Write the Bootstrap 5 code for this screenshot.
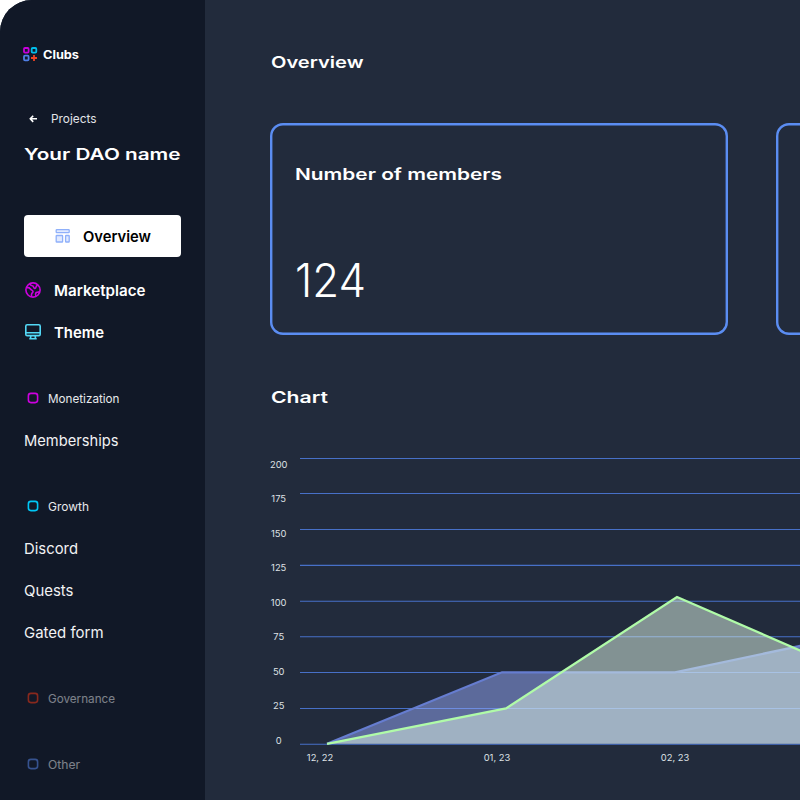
<!DOCTYPE html>
<html lang="en">
<head>
<meta charset="utf-8">
<meta name="viewport" content="width=device-width, initial-scale=1">
<title>Clubs</title>
<link href="https://cdn.jsdelivr.net/npm/bootstrap@5.3.0/dist/css/bootstrap.min.css" rel="stylesheet">
<style>
body{background:#fff;font-family:Inter,sans-serif;color:#fff;height:800px;overflow:hidden}
.shell{height:800px;width:800px;background:#222b3c;border-top-left-radius:32px}
.side{width:205.3px;background:#111827;padding:0 24px}
svg{display:block;flex:none}
.fit{display:inline-block;white-space:nowrap;transform-origin:0 50%}
.brand{height:24px;margin-top:42px;margin-left:-1px;gap:5px;font-size:12px;font-weight:700;line-height:24px}
.back{height:24px;margin-top:40px;padding-left:4.5px;gap:14px;font-size:12px;color:#e2e4e8}
.wide{font-weight:600;font-size:16px;line-height:24px;margin:0}
.dao{margin-top:11px}
.page-title{margin-top:49px;padding-left:.5px}
.chart{margin-top:32px}
.item{height:42px;font-size:15px;line-height:42px;color:#f1f2f4;text-decoration:none}
.item.main-link{font-weight:600;color:#fff;gap:12px}
.item.on{background:#fff;color:#000;border-radius:4px;padding-left:30px;gap:11px;margin:50px 0 12px;width:157px}
.group{margin-top:24px}
.group-title{height:42px;gap:9px;padding-left:3px;font-size:12px;color:#e7e9ec}
.dim{opacity:.5}
.content{width:595px;padding-left:65px}
.stats{gap:48px;margin-top:50px;width:964px}
.stat{width:458px;height:212px;box-shadow:inset 0 0 0 2.4px #5b8df2;border-radius:13px;padding:38px 24.5px 0;flex:none}
.figure-num{font-size:46px;line-height:56px;font-weight:300;margin-top:66px}
</style>
<script src="https://cdn.jsdelivr.net/npm/bootstrap@5.3.0/dist/js/bootstrap.bundle.min.js"></script>
</head>
<body>
<div class="shell d-flex overflow-hidden">
  <nav class="side flex-shrink-0 d-flex flex-column">
    <div class="brand d-flex align-items-center">
      <svg width="15" height="16" viewBox="0 0 15 16" fill="none" stroke-width="1.8"><rect x="1" y="2" width="4.6" height="4.6" rx="1" stroke="#c800dc"/><rect x="8.7" y="2" width="4.6" height="4.6" rx="1" stroke="#00bdea"/><rect x="1" y="9.7" width="4.6" height="4.6" rx="1" stroke="#4f7fe6"/><path d="M11 9v6M8 12h6" stroke="#ef4423"/></svg>
      <span class="fit" data-w="36">Clubs</span>
    </div>
    <div class="back d-flex align-items-center">
      <svg width="8" height="9" viewBox="0 0 8 9" fill="none" stroke="#fff" stroke-width="1.6"><path d="M4.2 1.7 1.3 4.8l2.9 3.1M1.3 4.8h6.7"/></svg>
      <span class="fit" data-w="45.5">Projects</span>
    </div>
    <h1 class="wide dao"><span class="fit" data-w="156.5">Your DAO name</span></h1>
    <a class="item main-link on d-flex align-items-center">
      <svg width="18" height="18" viewBox="0 0 18 18" fill="#e1eaff" stroke="#8fb0fa" stroke-width="1.3"><rect x="2.2" y="2.6" width="13" height="3" rx=".6"/><rect x="2.2" y="8.5" width="6.4" height="6.5" rx=".6"/><rect x="11.6" y="8.5" width="3.6" height="6.5" rx=".6"/></svg>
      <span class="fit" data-w="68">Overview</span>
    </a>
    <a class="item main-link d-flex align-items-center">
      <svg width="18" height="18" viewBox="0 0 18 18" fill="none" stroke="#cd00df" stroke-width="1.6" stroke-linejoin="round"><circle cx="9" cy="9" r="7.1"/><path d="M6.1 2.6c0 1.6.9 2 2 2.1s1.3.5 1.5 1.5 1.3 1.6 2 .8.3-1.7 1.2-2.3l1-.6M2.3 6.6h1.9c1.5 0 1.7.9 2.6 1.8s2.2 1 2.2 2.2-.9 1.2-1.3 2.2-.2 2-.2 3M11.9 15.3l-.3-1.6c-.2-1.5.4-2.2 1.6-2.4l2.2-.4"/></svg>
      <span class="fit" data-w="91.5">Marketplace</span>
    </a>
    <a class="item main-link d-flex align-items-center">
      <svg width="18" height="18" viewBox="0 0 18 18" fill="none" stroke="#53d8f6" stroke-width="1.6"><rect x="1.8" y="1.8" width="14.4" height="10.8" rx="1.4"/><path d="M2 9.7h14M6.8 12.8l-.3 2.9M11.2 12.8l.3 2.9M5.3 15.7h7.4"/></svg>
      <span class="fit" data-w="50">Theme</span>
    </a>
    <div class="group">
      <div class="group-title d-flex align-items-center"><svg width="12" height="12" viewBox="0 0 12 12"><rect x="1.4" y="1.4" width="9.2" height="9.2" rx="2.5" fill="none" stroke="#cd00df" stroke-width="1.6"/></svg><span class="fit" data-w="71.5">Monetization</span></div>
      <a class="item d-block"><span class="fit" data-w="94.5">Memberships</span></a>
    </div>
    <div class="group">
      <div class="group-title d-flex align-items-center"><svg width="12" height="12" viewBox="0 0 12 12"><rect x="1.4" y="1.4" width="9.2" height="9.2" rx="2.5" fill="none" stroke="#00c6f5" stroke-width="1.6"/></svg><span class="fit" data-w="41">Growth</span></div>
      <a class="item d-block"><span class="fit" data-w="54">Discord</span></a>
      <a class="item d-block"><span class="fit" data-w="49.5">Quests</span></a>
      <a class="item d-block"><span class="fit" data-w="79.5">Gated form</span></a>
    </div>
    <div class="group dim">
      <div class="group-title d-flex align-items-center"><svg width="12" height="12" viewBox="0 0 12 12"><rect x="1.4" y="1.4" width="9.2" height="9.2" rx="2.5" fill="none" stroke="#ff3815" stroke-width="1.6"/></svg><span class="fit" data-w="67">Governance</span></div>
    </div>
    <div class="group dim">
      <div class="group-title d-flex align-items-center"><svg width="12" height="12" viewBox="0 0 12 12"><rect x="1.4" y="1.4" width="9.2" height="9.2" rx="2.5" fill="none" stroke="#5b8df6" stroke-width="1.6"/></svg><span class="fit" data-w="32">Other</span></div>
    </div>
  </nav>
  <main class="content overflow-hidden">
    <h2 class="wide page-title"><span class="fit" data-w="92.5">Overview</span></h2>
    <section class="stats d-flex">
      <div class="stat">
        <h3 class="wide"><span class="fit" data-w="207">Number of members</span></h3>
        <div class="figure-num"><span class="fit" data-w="71">124</span></div>
      </div>
      <div class="stat"></div>
    </section>
    <h2 class="wide page-title"><span class="fit" data-w="57">Chart</span></h2>
    <svg class="chart" width="530" height="360" viewBox="270 440 530 360">
      <g stroke="#4770c8" stroke-width="1.1"><path d="M300 458.5H800M300 493.5H800M300 529.5H800M300 565.4H800M300 601.2H800M300 636.8H800M300 672.5H800M300 708.5H800M300 744.3H800"/></g>
      <path d="M327 743.8 502 672.3H675L800 646V743.8Z" fill="#95a9fa" fill-opacity=".5"/>
      <path d="M327 743.8 502 672.3H675L805 645" fill="none" stroke="#667dd0" stroke-width="2.3"/>
      <path d="M327 743.8 506 708.5 677 597 800 650.5V743.8Z" fill="#dff5e8" fill-opacity=".51"/>
      <path d="M327 743.8 506 708.5 677 597 805 652.6" fill="none" stroke="#b0fba8" stroke-width="2.3"/>
      <g fill="#dfe1e5" font-family="Inter,sans-serif" font-size="9.4" text-anchor="middle">
        <text x="278.7" y="467.5">200</text><text x="278.7" y="502">175</text><text x="278.7" y="536.5">150</text><text x="278.7" y="571">125</text><text x="278.7" y="605.6">100</text><text x="278.7" y="640">75</text><text x="278.7" y="674.7">50</text><text x="278.7" y="709.2">25</text><text x="278.7" y="744">0</text>
        <text x="320" y="761">12, 22</text><text x="497" y="761">01, 23</text><text x="675" y="761">02, 23</text>
      </g>
    </svg>
  </main>
</div>
<script>
// Stretch each label horizontally to its design width
document.querySelectorAll('.fit').forEach(function (el) {
  el.style.transform = 'translateY(.8px) scaleX(' + (el.dataset.w / el.getBoundingClientRect().width) + ')';
});
</script>
</body>
</html>
